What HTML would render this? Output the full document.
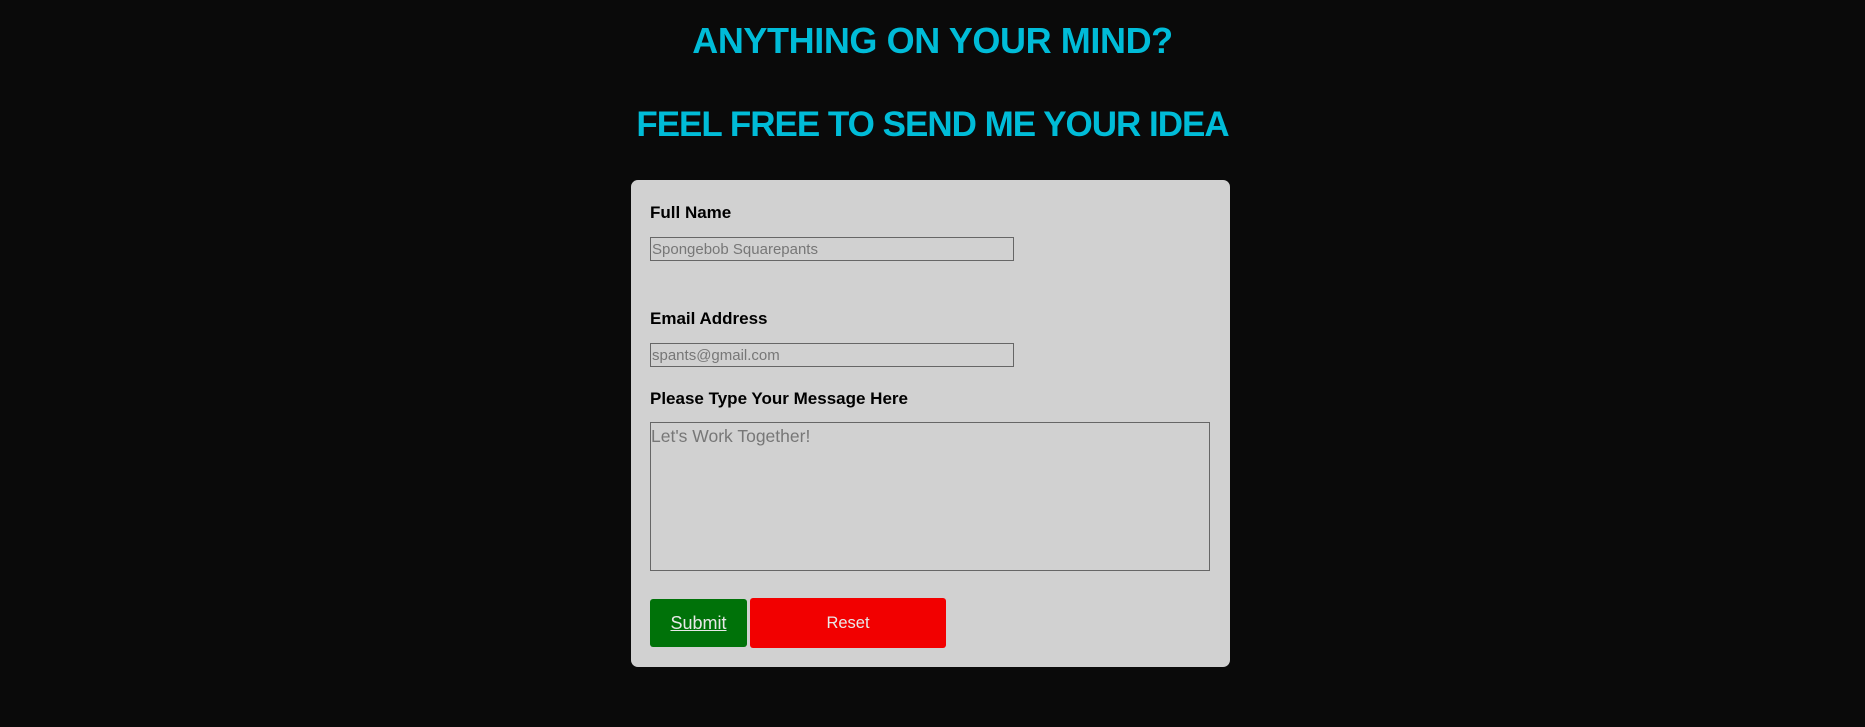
<!DOCTYPE html>
<html><head><meta charset="utf-8"><style>
*{box-sizing:border-box;margin:0;padding:0}
body{width:1865px;height:727px;background:#0a0a0a;font-family:"Liberation Sans",Arial,sans-serif;position:relative;overflow:hidden}
h1{position:absolute;left:0;width:1865px;text-align:center;color:#00bcd8;font-weight:900;white-space:nowrap}
.card{position:absolute;left:631px;top:180px;width:599px;height:487px;background:#d1d1d1;border-radius:7px}
.lbl{position:absolute;left:19px;font-weight:bold;font-size:17px;color:#000}
.inp{position:absolute;left:19px;width:364px;height:24px;border:1px solid #666;font-size:15px;color:#777;padding:3px 1px;line-height:17px}
.ta{position:absolute;left:19px;top:242px;width:560px;height:149px;border:1px solid #666;font-size:17.5px;color:#777;padding:3px 0}
.btn{position:absolute;color:#e8e8e8;text-align:center;border-radius:3px}
</style></head><body>
<h1 style="top:20px;font-size:36px;letter-spacing:-0.4px">ANYTHING ON YOUR MIND?</h1>
<h1 style="top:105px;font-size:35px;letter-spacing:-1px">FEEL FREE TO SEND ME YOUR IDEA</h1>
<div class="card">
<div class="lbl" style="top:23px">Full Name</div>
<div class="inp" style="top:57px">Spongebob Squarepants</div>
<div class="lbl" style="top:129px">Email Address</div>
<div class="inp" style="top:163px">spants@gmail.com</div>
<div class="lbl" style="top:209px">Please Type Your Message Here</div>
<div class="ta">Let's Work Together!</div>
<div class="btn" style="left:19px;top:419px;width:97px;height:48px;line-height:48px;background:#007209;text-decoration:underline;font-size:18px">Submit</div>
<div class="btn" style="left:119px;top:418px;width:196px;height:50px;line-height:50px;background:#f20000;font-size:16.5px">Reset</div>
</div>
</body></html>
